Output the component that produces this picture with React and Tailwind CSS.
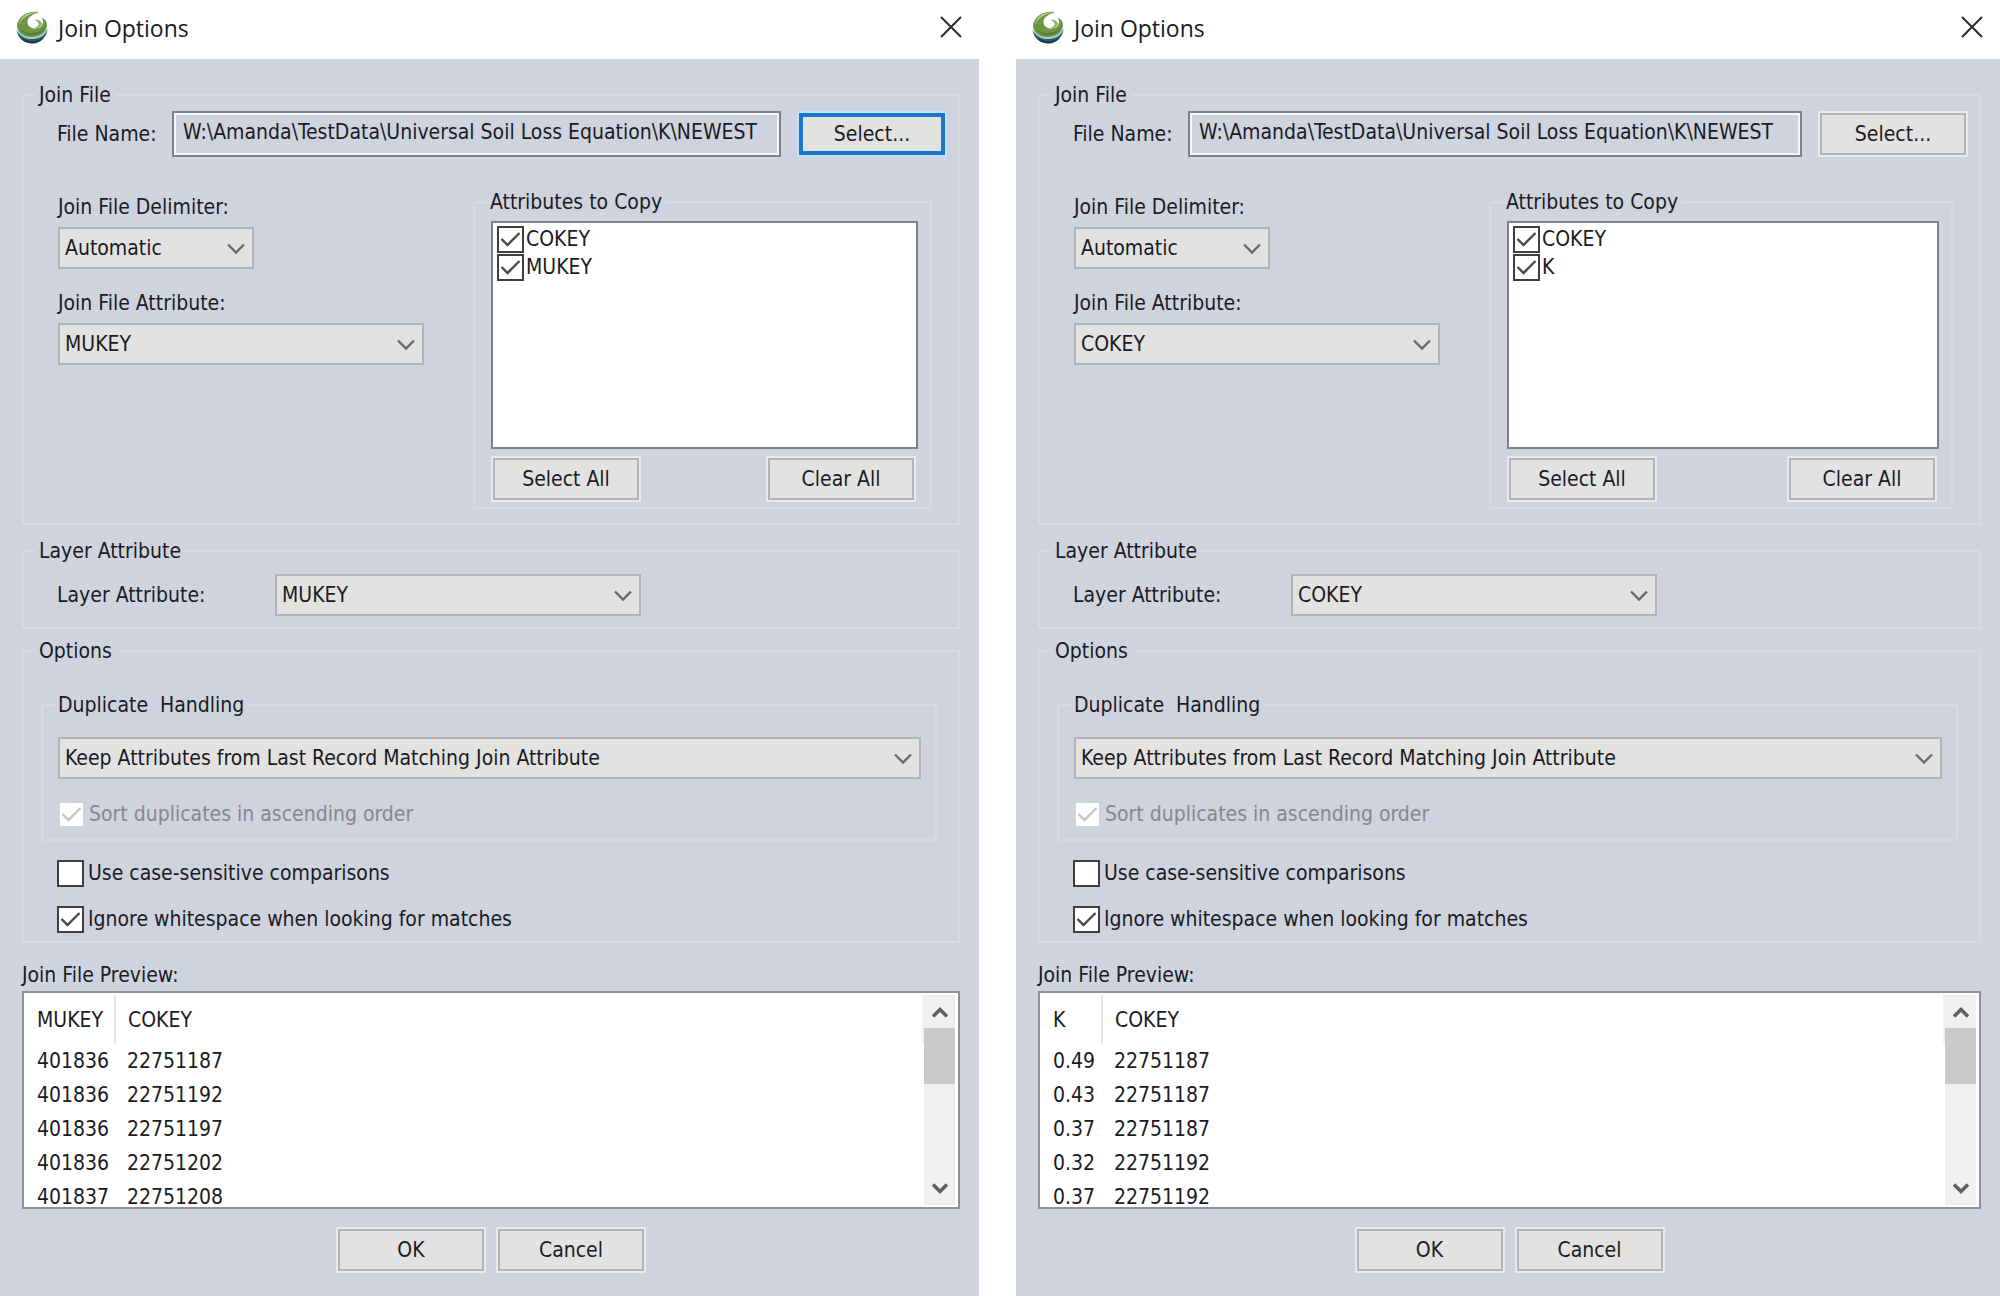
import React, { useState } from 'react'

const dialogs = [
  {
    id: 'mukey',
    focusSelect: true,
    fileAttribute: 'MUKEY',
    layerAttribute: 'MUKEY',
    attributes: ['COKEY', 'MUKEY'],
    columns: ['MUKEY', 'COKEY'],
    firstCol: 'w-[91px]',
    rows: [
      ['401836', '22751187'],
      ['401836', '22751192'],
      ['401836', '22751197'],
      ['401836', '22751202'],
      ['401837', '22751208'],
    ],
  },
  {
    id: 'cokey',
    focusSelect: false,
    fileAttribute: 'COKEY',
    layerAttribute: 'COKEY',
    attributes: ['COKEY', 'K'],
    columns: ['K', 'COKEY'],
    firstCol: 'w-[62px]',
    rows: [
      ['0.49', '22751187'],
      ['0.43', '22751187'],
      ['0.37', '22751187'],
      ['0.32', '22751192'],
      ['0.37', '22751192'],
    ],
  },
];

const Logo = () => (
  <svg className="w-8 h-[34px] shrink-0" viewBox="0 0 32 34" aria-hidden="true">
    <path d="M0.5 19 C2 28 9 32.5 17 32 C25 31.500 31 26 31.5 18 C29 24 24 27 17 27 C9 27 3 24 0.5 19Z" fill="#2b6078" />
    <path d="M4 26.5 C9 34 22 35 28 26.5 C21 31 12 31 4 26.5Z" fill="#17384f" />
    <path d="M0.6 17 C3 25.500 10 28.500 17 28 C24.500 27.500 30 24 31.4 17 C26 23 20 25 14 24 C8 23.200 3 21 0.6 17Z" fill="#a9cfc0" />
    <path d="M23 1 C10 -1 1 7 1 15.5 C2.5 23 9 26.300 16 26 C24 25.700 31 21 31 14 C31 10.500 29 8 26 7 C28 11 27 15 23.500 16.800 C18 19 11.500 16.500 11.500 11 C11.500 6 17 3 23 1Z" fill="#6f9545" />
    <path d="M21 1.3 C12 0.500 4 6 3 13.500 C6.500 6.500 13 3 21 1.3Z" fill="#b9cd95" />
    <path d="M4 18 C9 23 22 24 29 16 C26 26 9 27.500 4 18Z" fill="#587f3a" />
    <path d="M18 9 C21 8 25.500 9.500 26 13 C25 16.500 21.500 18 18 16.800 C21 16.500 23.500 14.500 22.500 12 C21.800 10.200 20 9.300 18 9Z" fill="#8fb060" />
  </svg>
);

const Chevron = ({ className }) => (
  <svg className={className} viewBox="0 0 18 12" fill="none" stroke="#6a6a6a" strokeWidth="2.4" aria-hidden="true">
    <path d="M1 1.500 L9 9.500 L17 1.500" />
  </svg>
);

const Dropdown = ({ id, options, className, label }) => (
  <div className={`relative ${className}`}>
    <select
      id={id}
      aria-label={label}
      className="appearance-none block w-full h-[42px] pl-[5px] pr-10 bg-[#e2e2e1] border-2 border-[#b2b3b6] rounded-none outline-none"
    >
      {options.map((o) => (
        <option key={o}>{o}</option>
      ))}
    </select>
    <Chevron className="absolute right-[9px] top-4 w-[18px] h-3 pointer-events-none" />
  </div>
);

const CheckBox = ({ label, defaultChecked, disabled, tight }) => {
  const [checked, setChecked] = useState(defaultChecked);
  return (
    <label className={`flex items-center h-7 ${tight ? 'gap-[2px]' : 'gap-1'} ${disabled ? 'text-[#85878d]' : ''}`}>
      <span className="relative w-[27px] h-[27px] shrink-0">
        <input
          type="checkbox"
          checked={checked}
          disabled={disabled}
          onChange={(e) => setChecked(e.target.checked)}
          className={`appearance-none block w-[27px] h-[27px] bg-white border-2 ${disabled ? 'border-[#cfd3de]' : 'border-[#3f3f43]'}`}
        />
        {checked && (
          <svg
            className="absolute inset-0 w-[27px] h-[27px] pointer-events-none"
            viewBox="0 0 27 27"
            fill="none"
            stroke={disabled ? '#c4c4c6' : '#4a4a4a'}
            strokeWidth="2.4"
            aria-hidden="true"
          >
            <path d="M4.500 13 L10.500 19 L22.500 7" />
          </svg>
        )}
      </span>
      <span className="whitespace-nowrap">{label}</span>
    </label>
  );
};

const PushButton = ({ children, focused }) => (
  <button
    type="button"
    className={`w-[150px] h-[46px] shrink-0 border-2 ${focused ? 'border-[#bfe4fa]' : 'border-[#e8eaef]'}`}
  >
    <span
      className={`flex items-center justify-center w-full h-full bg-[#e2e2e1] ${
        focused ? 'border-4 border-[#1a78cc]' : 'border-2 border-[#b2b3b6]'
      }`}
    >
      {children}
    </span>
  </button>
);

const Group = ({ title, className, bodyClassName, children }) => (
  <fieldset className={`min-w-0 border-2 border-[#d8dae0] ${className}`}>
    <legend className="ml-[11px] px-1 whitespace-pre leading-7">{title}</legend>
    <div className={bodyClassName}>{children}</div>
  </fieldset>
);

const ScrollBar = () => (
  <div className="flex flex-col w-[31px] my-[2px] mr-[3px] bg-[#f0f0f0]">
    <button type="button" aria-label="Scroll up" className="flex items-center justify-center h-[33px]">
      <svg className="w-4 h-3" viewBox="0 0 16 12" fill="none" stroke="#606060" strokeWidth="3.6" aria-hidden="true">
        <path d="M1 10.500 L8 3.500 L15 10.500" />
      </svg>
    </button>
    <div className="h-14 bg-[#cacaca]"></div>
    <button type="button" aria-label="Scroll down" className="flex items-center justify-center h-[33px] mt-auto">
      <svg className="w-4 h-3" viewBox="0 0 16 12" fill="none" stroke="#606060" strokeWidth="3.6" aria-hidden="true">
        <path d="M1 1.500 L8 8.500 L15 1.500" />
      </svg>
    </button>
  </div>
);

const JoinDialog = ({ data }) => (
  <section className="flex flex-col min-w-0" aria-label="Join Options">
    <header className="flex items-center h-[59px] pl-4 pr-4 pb-1 bg-white">
      <Logo />
      <h1 className="ml-[10px] font-['Open_Sans','Noto_Sans',sans-serif] text-[23px] leading-8">Join Options</h1>
      <button type="button" aria-label="Close" className="ml-auto pb-[2px]">
        <svg className="w-6 h-6" viewBox="0 0 24 24" fill="none" stroke="#2a2a2a" strokeWidth="2" aria-hidden="true">
          <path d="M2 2 L22 22 M22 2 L2 22" />
        </svg>
      </button>
    </header>

    <form className="flex-1 pt-[22px] pl-[22px] pr-[19px] pb-5 bg-[#cfd3de]" onSubmit={(e) => e.preventDefault()}>
      <Group title="Join File" className="pb-[14px]">
        <div className="flex items-center pt-[2px] pl-[33px] pr-[11px]">
          <label htmlFor={`${data.id}-file`} className="w-[115px] shrink-0">File Name:</label>
          <div className="flex-1 min-w-0 border-2 border-[#7e8188]">
            <input
              id={`${data.id}-file`}
              readOnly
              value="W:\Amanda\TestData\Universal Soil Loss Equation\K\NEWEST"
              className="block w-full h-[42px] pl-[7px] pb-1 bg-transparent border-2 border-[#f4f5f8] outline-none"
            />
          </div>
          <div className="ml-4 flex">
            <PushButton focused={data.focusSelect}>Select...</PushButton>
          </div>
        </div>

        <div className="flex pt-[31px] pr-[26px]">
          <div className="w-[449px] shrink-0 pt-[5px] pl-[34px]">
            <label htmlFor={`${data.id}-delimiter`} className="block mb-[6px]">Join File Delimiter:</label>
            <Dropdown id={`${data.id}-delimiter`} className="w-[196px]" options={['Automatic', 'Comma', 'Tab', 'Space']} />
            <label htmlFor={`${data.id}-attr`} className="block mt-5 mb-[6px]">Join File Attribute:</label>
            <Dropdown id={`${data.id}-attr`} className="w-[366px]" options={[data.fileAttribute]} />
          </div>

          <Group title="Attributes to Copy" className="flex-1 pb-[5px]" bodyClassName="pl-4 pr-3">
            <div className="flex flex-col h-[228px] mt-[5px] pl-1 pt-[2px] bg-white border-2 border-[#7e8188]">
              {data.attributes.map((name) => (
                <CheckBox key={name} label={name} defaultChecked tight />
              ))}
            </div>
            <div className="flex justify-between mt-[7px] pr-[2px]">
              <PushButton>Select All</PushButton>
              <PushButton>Clear All</PushButton>
            </div>
          </Group>
        </div>
      </Group>

      <Group title="Layer Attribute" className="mt-3 pb-[11px]">
        <div className="flex items-center pt-[9px] pl-[33px]">
          <label htmlFor={`${data.id}-layer`} className="w-[218px] shrink-0">Layer Attribute:</label>
          <Dropdown id={`${data.id}-layer`} className="w-[366px]" options={[data.layerAttribute]} />
        </div>
      </Group>

      <Group title="Options" className="mt-2 pb-2">
        <Group
          title="Duplicate  Handling"
          className="mt-[26px] ml-[17px] mr-[21px] pb-[11px]"
          bodyClassName="pl-[15px] pr-[14px]"
        >
          <Dropdown
            label="Duplicate Handling"
            className="mt-[18px] mb-[21px]"
            options={['Keep Attributes from Last Record Matching Join Attribute']}
          />
          <CheckBox label="Sort duplicates in ascending order" defaultChecked disabled />
        </Group>
        <div className="flex flex-col gap-[18px] pt-[18px] pl-[33px]">
          <CheckBox label="Use case-sensitive comparisons" defaultChecked={false} />
          <CheckBox label="Ignore whitespace when looking for matches" defaultChecked />
        </div>
      </Group>

      <h2 className="mt-[18px]">Join File Preview:</h2>
      <div className="flex h-[218px] mt-[2px] overflow-hidden bg-white border-2 border-[#8d9098]">
        <div className="flex-1 min-w-0 pt-[2px]">
          <table className="w-full table-fixed text-left">
            <thead>
              <tr className="h-[49px]">
                <th className={`${data.firstCol} pl-[13px] font-normal border-r-2 border-[#e6e6e6]`}>{data.columns[0]}</th>
                <th className="pl-3 font-normal border-r-2 border-[#f2f2f2]">{data.columns[1]}</th>
              </tr>
            </thead>
            <tbody>
              {data.rows.map((row, index) => (
                <tr key={index} className="h-[34px]">
                  <td className="pl-[13px]">{row[0]}</td>
                  <td className="pl-3">{row[1]}</td>
                </tr>
              ))}
            </tbody>
          </table>
        </div>
        <ScrollBar />
      </div>

      <div className="flex justify-center gap-[10px] mt-[18px]">
        <PushButton>OK</PushButton>
        <PushButton>Cancel</PushButton>
      </div>
    </form>
  </section>
);

const App = () => {
  return (
    <main className="grid grid-cols-[979fr_984fr] gap-[37px] min-h-screen bg-white text-[#1b1b24] font-['DejaVu_Sans_Condensed','DejaVu_Sans',sans-serif] text-[21px] leading-7">
      {dialogs.map((data) => (
        <JoinDialog key={data.id} data={data} />
      ))}
    </main>
  );
}

export default App
